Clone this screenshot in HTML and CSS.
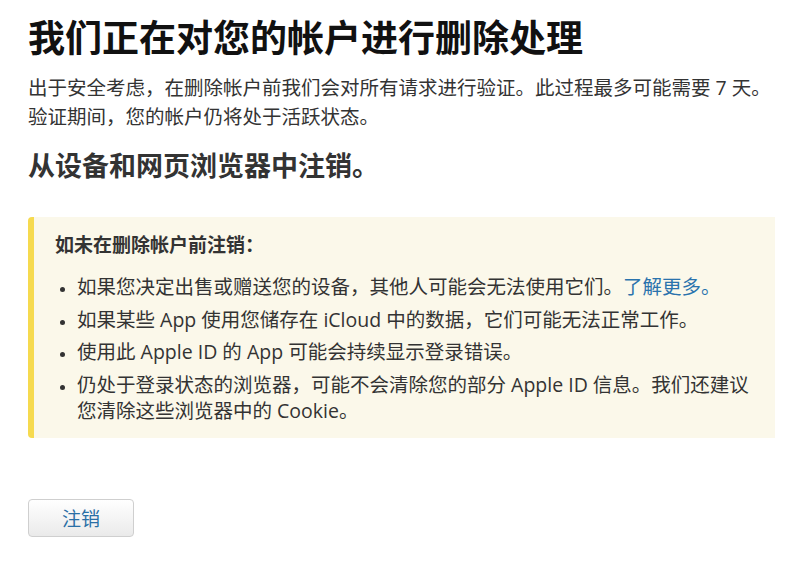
FILE: index.html
```html
<!DOCTYPE html>
<html lang="zh-CN">
<head>
    <meta charset="UTF-8">
    <meta name="viewport" content="width=device-width, initial-scale=1.0">
    <title>删除帐户</title>
    <link rel="stylesheet" href="styles.css">
</head>
<body>
    <div class="page">
        <h1>我们正在对您的帐户进行删除处理</h1>
        <p class="intro">出于安全考虑，在删除帐户前我们会对所有请求进行验证。此过程最多可能需要 7 天。验证期间，您的帐户仍将处于活跃状态。</p>

        <h2>从设备和网页浏览器中注销。</h2>

        <!-- Warning box -->
        <div class="notice">
            <h3>如未在删除帐户前注销：</h3>
            <ul>
                <li>如果您决定出售或赠送您的设备，其他人可能会无法使用它们。<a href="#">了解更多。</a></li>
                <li>如果某些 App 使用您储存在 iCloud 中的数据，它们可能无法正常工作。</li>
                <li>使用此 Apple ID 的 App 可能会持续显示登录错误。</li>
                <li>仍处于登录状态的浏览器，可能不会清除您的部分 Apple ID 信息。我们还建议您清除这些浏览器中的 Cookie。</li>
            </ul>
        </div>

        <button type="button" class="btn">注销</button>
    </div>
</body>
</html>
```

FILE: styles.css
```css
body {
    font-family: "Open Sans", "Noto Sans CJK SC", sans-serif;
    margin: 0;
    padding: 0;
    background-color: #fff;
    color: #333;
}
.page {
    padding: 0 22px 0 28px;
}
h1 {
    margin: 16px 0 0;
    font-size: 37px;
    line-height: 44px;
    font-weight: bold;
    color: #111;
}
.intro {
    margin: 13px 0 0;
    font-size: 19.5px;
    line-height: 29px;
    color: #333;
}
h2 {
    margin: 18px 0 0;
    font-size: 27px;
    line-height: 34px;
    font-weight: bold;
    color: #333;
}
.notice {
    margin-top: 34px;
    padding: 15px 10px 14px 21px;
    background: #fbf8ea;
    border-left: 6px solid #f6da4f;
    border-radius: 4px 0 0 4px;
}
.notice h3 {
    margin: 0;
    font-size: 19px;
    line-height: 26px;
    font-weight: bold;
    color: #333;
}
.notice ul {
    margin: 16px 0 0;
    padding-left: 22px;
}
.notice li {
    font-size: 19.5px;
    line-height: 26px;
    margin-bottom: 6.5px;
}
.notice li::marker {
    font-size: 15px;
}
.notice li:last-child {
    margin-bottom: 0;
}
.notice a {
    color: #2a73ad;
    text-decoration: none;
}
.btn {
    display: block;
    margin-top: 61px;
    width: 106px;
    height: 38px;
    padding: 0;
    font-family: inherit;
    font-size: 19px;
    color: #2a6fa6;
    background: linear-gradient(#fff, #eaeaea);
    border: 1px solid #cfcfcf;
    border-radius: 4px;
    cursor: pointer;
}
```
